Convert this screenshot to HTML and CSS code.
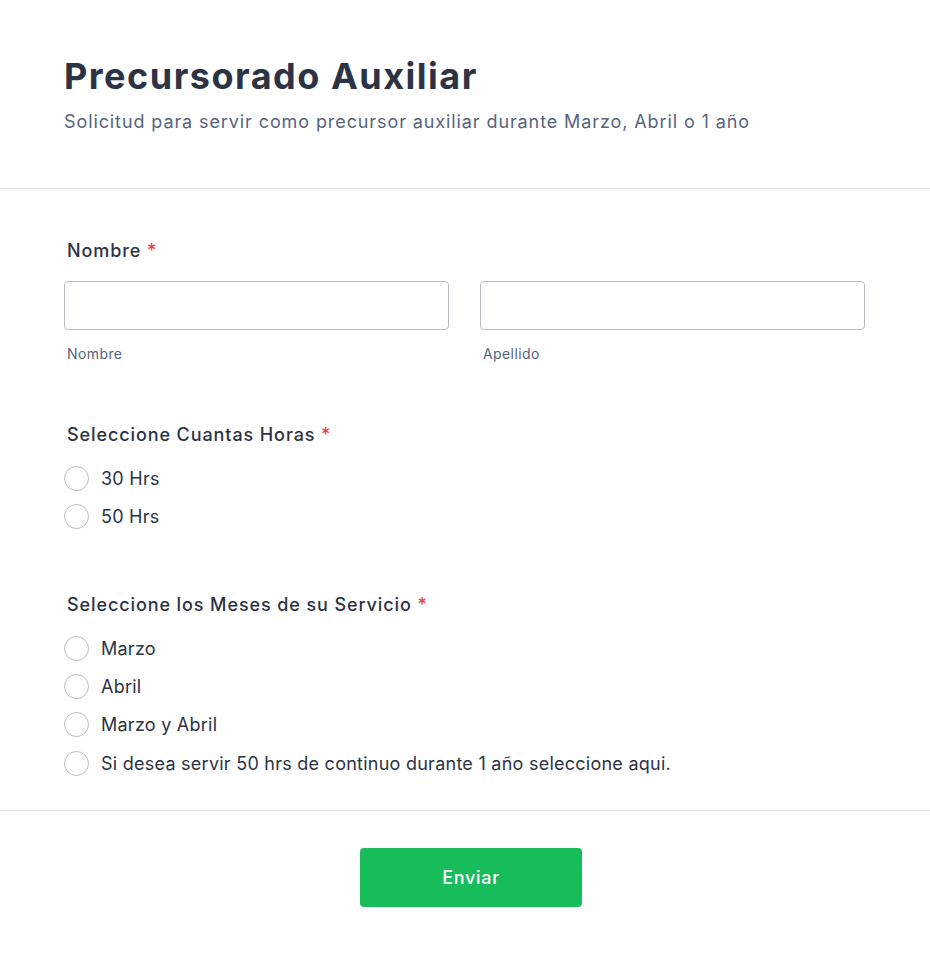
FILE: index.html
```html
<!DOCTYPE html>
<html>
<head>
<meta charset="UTF-8">
<title>Precursorado Auxiliar</title>
<link rel="stylesheet" href="styles.css">
</head>
<body>
	<!-- encabezado -->
	<div class="form-header">
		<h1>Precursorado Auxiliar</h1>
		<p>Solicitud para servir como precursor auxiliar durante Marzo, Abril o 1 año</p>
	</div>

	<form class="form-body">
		<!-- nombre -->
		<div class="field">
			<label class="field-label">Nombre <span class="req">*</span></label>
			<div class="name-row">
				<div class="name-col">
					<input type="text">
					<span class="sublabel">Nombre</span>
				</div>
				<div class="name-col">
					<input type="text">
					<span class="sublabel">Apellido</span>
				</div>
			</div>
		</div>

		<!-- horas -->
		<div class="field">
			<label class="field-label">Seleccione Cuantas Horas <span class="req">*</span></label>
			<ul class="options">
				<li><span class="radio"></span>30 Hrs</li>
				<li><span class="radio"></span>50 Hrs</li>
			</ul>
		</div>

		<!-- meses -->
		<div class="field">
			<label class="field-label">Seleccione los Meses de su Servicio <span class="req">*</span></label>
			<ul class="options">
				<li><span class="radio"></span>Marzo</li>
				<li><span class="radio"></span>Abril</li>
				<li><span class="radio"></span>Marzo y Abril</li>
				<li><span class="radio"></span>Si desea servir 50 hrs de continuo durante 1 año seleccione aqui.</li>
			</ul>
		</div>

		<div class="form-footer">
			<button type="button" class="submit">Enviar</button>
		</div>
	</form>
</body>
</html>
```

FILE: styles.css
```css
body {
  margin: 0;
  font-family: Inter, "Noto Sans", sans-serif;
  font-optical-sizing: none;
  background-color: #fff;
  color: #2c3345;
}

.form-header {
  padding: 52px 64px 54px;
  border-bottom: 1px solid #e3e5ec;
}

.form-header h1 {
  margin: 0;
  font-size: 36px;
  font-weight: 700;
  line-height: 48px;
  letter-spacing: 1.5px;
  color: #2c3345;
}

.form-header p {
  margin: 10px 0 0;
  font-size: 18px;
  line-height: 24px;
  letter-spacing: 0.9px;
  color: #57647e;
}

.form-body {
  padding: 0 65px 0 64px;
}

.field {
  padding-top: 60px;
}

.field:first-child {
  padding-top: 50px;
}

.field-label {
  display: block;
  margin-left: 3px;
  font-size: 18px;
  font-weight: 500;
  line-height: 24px;
  letter-spacing: 0.9px;
}

.req {
  color: #f23a3c;
}

.name-row {
  display: flex;
  gap: 31px;
  margin-top: 18px;
}

.name-col {
  flex: 1;
}

.name-col input {
  display: block;
  box-sizing: border-box;
  width: 100%;
  height: 49px;
  border: 1px solid #b8bdc9;
  border-radius: 4px;
  margin: 0;
}

.sublabel {
  display: block;
  margin: 15px 0 0 3px;
  font-size: 14px;
  line-height: 18px;
  letter-spacing: 0.4px;
  color: #57647e;
}

.options {
  list-style: none;
  margin: 19px 0 0;
  padding: 0;
}

.options li {
  display: flex;
  align-items: center;
  height: 24px;
  margin-bottom: 14.3px;
  font-size: 18px;
  letter-spacing: 0.25px;
  color: #2c3345;
}

.options li:last-child {
  margin-bottom: 5px;
}

.radio {
  box-sizing: border-box;
  width: 25px;
  height: 25px;
  border: 1px solid #b8bdc9;
  border-radius: 50%;
  margin-right: 12px;
}

.form-footer {
  margin: 35px -65px 0 -64px;
  border-top: 1px solid #e3e5ec;
  padding: 37px 0 40px;
  display: flex;
  justify-content: center;
}

.submit {
  width: 222px;
  height: 59px;
  margin-left: 12px;
  border: none;
  border-radius: 4px;
  background-color: #18bd5b;
  color: #fff;
  font-family: Inter, "Noto Sans", sans-serif;
  font-size: 18px;
  font-weight: 500;
  letter-spacing: 0.7px;
}
```
